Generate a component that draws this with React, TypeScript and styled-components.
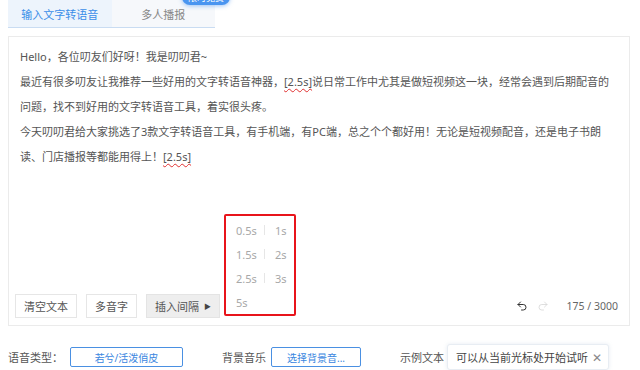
import React from "react";
import styled, { createGlobalStyle } from "styled-components";
import { Undo2, Redo2 } from "lucide-react";

const Global = createGlobalStyle`
  html, body { margin: 0; padding: 0; background: #fff; }
  body { font-family: "Noto Sans", "Noto Sans CJK SC", sans-serif; color: #555; }
  * { box-sizing: border-box; }
`;

const Page = styled.div`
  width: 640px;
  height: 370px;
  overflow: hidden;
  padding: 0 10px 0 8px;
  display: flex;
  flex-direction: column;
`;

const TabBar = styled.div`
  position: relative;
  display: flex;
  width: 207px;
  height: 28px;
  flex: none;
  border-bottom: 1px solid #c9dcf2;
`;

const Tab = styled.div<{ $active?: boolean }>`
  width: 104px;
  display: flex;
  align-items: center;
  justify-content: center;
  font-size: 11px;
  color: ${(p) => (p.$active ? "#3a8ee8" : "#888")};
  background: ${(p) => (p.$active ? "#edf4fc" : "#f6f8fb")};
`;

const Badge = styled.div`
  position: absolute;
  left: 174px;
  top: -11px;
  width: 48px;
  height: 16px;
  border-radius: 8px;
  background: #4a95f0;
  box-shadow: 0 1px 4px rgba(60, 140, 240, 0.5);
  color: #fff;
  font-size: 9px;
  display: flex;
  align-items: center;
  justify-content: center;
`;

const Panel = styled.div`
  margin-top: 8px;
  height: 290px;
  flex: none;
  border: 1px solid #ebebeb;
  display: flex;
  flex-direction: column;
  padding: 7px 6px 7px 6px;
`;

const Editor = styled.div`
  flex: 1;
  padding-left: 5px;
  font-size: 11px;
  line-height: 25px;
  color: #555;
`;

const Line = styled.div`
  white-space: nowrap;
`;

const Pause = styled.span`
  text-decoration: underline wavy #e03030;
  text-decoration-thickness: 1px;
  text-underline-offset: 2px;
  color: #555;
`;

const Toolbar = styled.div`
  display: flex;
  align-items: center;
  gap: 9px;
`;

const ToolButton = styled.div<{ $pressed?: boolean }>`
  position: relative;
  height: 24px;
  padding: 0 8px;
  display: flex;
  align-items: center;
  gap: 5px;
  font-size: 11px;
  color: #555;
  border: 1px solid ${(p) => (p.$pressed ? "#e4e4e4" : "#e6e6e6")};
  background: ${(p) => (p.$pressed ? "#eeeeee" : "#fff")};
`;

const Caret = styled.span`
  font-size: 7px;
  color: #444;
`;

const Menu = styled.div`
  position: absolute;
  left: 77px;
  top: -81px;
  width: 72px;
  height: 102px;
  border: 2px solid #e8141b;
  border-radius: 2px;
  background: #fff;
  padding: 2px 0 0 10px;
  display: flex;
  flex-direction: column;
  font-size: 11px;
  color: #a8a8a8;
`;

const MenuRow = styled.div`
  height: 25px;
  display: flex;
  align-items: center;
`;

const MenuItem = styled.span`
  width: 28px;
`;

const MenuSep = styled.span`
  width: 1px;
  height: 10px;
  background: #e6e6e6;
  margin-right: 10px;
`;

const Spacer = styled.div`
  flex: 1;
`;

const History = styled.div<{ $disabled?: boolean; $gap: number }>`
  display: flex;
  align-items: center;
  color: ${(p) => (p.$disabled ? "#d6d6d6" : "#333")};
  margin-right: ${(p) => p.$gap}px;
  margin-left: ${(p) => (p.$disabled ? 0 : 3)}px;
`;

const Counter = styled.div`
  font-size: 10.5px;
  color: #666;
  margin-right: 5px;
`;

const Settings = styled.div`
  margin-top: 18px;
  display: flex;
  align-items: center;
  font-size: 11px;
  color: #555;
  height: 26px;
  flex: none;
`;

const Label = styled.span<{ $gap: number }>`
  margin-right: ${(p) => p.$gap}px;
`;

const Select = styled.div<{ $w: number }>`
  width: ${(p) => p.$w}px;
  height: 20px;
  border: 1px solid #4a90e2;
  border-radius: 2px;
  color: #3a86e0;
  font-size: 10px;
  display: flex;
  align-items: center;
  justify-content: center;
  margin-right: 39px;
`;

const Sample = styled.div`
  height: 26px;
  width: 162px;
  padding: 0 8px;
  display: flex;
  align-items: center;
  gap: 4px;
  border: 1px solid #e8edf3;
  border-radius: 3px;
  box-shadow: 0 0 4px rgba(120, 150, 190, 0.18);
  color: #444;
  font-size: 11px;
  background: #fff;
  white-space: nowrap;
`;

const Close = styled.span`
  color: #888;
  font-size: 12px;
`;

const intervals = [
  ["0.5s", "1s"],
  ["1.5s", "2s"],
  ["2.5s", "3s"],
  ["5s"],
];

export default function App() {
  return (
    <>
      <Global />
      <Page>
        <TabBar>
          <Tab $active>输入文字转语音</Tab>
          <Tab>多人播报</Tab>
          <Badge>限时免费</Badge>
        </TabBar>
        <Panel>
          <Editor>
            <Line>Hello，各位叨友们好呀！我是叨叨君~</Line>
            <Line>
              最近有很多叨友让我推荐一些好用的文字转语音神器，<Pause>[2.5s]</Pause>说日常工作中尤其是做短视频这一块，经常会遇到后期配音的
            </Line>
            <Line>问题，找不到好用的文字转语音工具，着实很头疼。</Line>
            <Line>
              今天叨叨君给大家挑选了3款文字转语音工具，有手机端，有PC端，总之个个都好用！无论是短视频配音，还是电子书朗
            </Line>
            <Line>
              读、门店播报等都能用得上！<Pause>[2.5s]</Pause>
            </Line>
          </Editor>
          <Toolbar>
            <ToolButton>清空文本</ToolButton>
            <ToolButton>多音字</ToolButton>
            <ToolButton $pressed>
              插入间隔<Caret>▶</Caret>
              <Menu>
                {intervals.map((row, i) => (
                  <MenuRow key={i}>
                    <MenuItem>{row[0]}</MenuItem>
                    {row[1] && <MenuSep />}
                    {row[1] && <span>{row[1]}</span>}
                  </MenuRow>
                ))}
              </Menu>
            </ToolButton>
            <Spacer />
            <History $gap={0}>
              <Undo2 size={12} strokeWidth={2} />
            </History>
            <History $disabled $gap={9}>
              <Redo2 size={12} strokeWidth={1.6} />
            </History>
            <Counter>175 / 3000</Counter>
          </Toolbar>
        </Panel>
        <Settings>
          <Label $gap={7}>语音类型：</Label>
          <Select $w={113}>若兮/活泼俏皮</Select>
          <Label $gap={5}>背景音乐</Label>
          <Select $w={90}>选择背景音...</Select>
          <Label $gap={3}>示例文本</Label>
          <Sample>
            可以从当前光标处开始试听<Close>✕</Close>
          </Sample>
        </Settings>
      </Page>
    </>
  );
}
